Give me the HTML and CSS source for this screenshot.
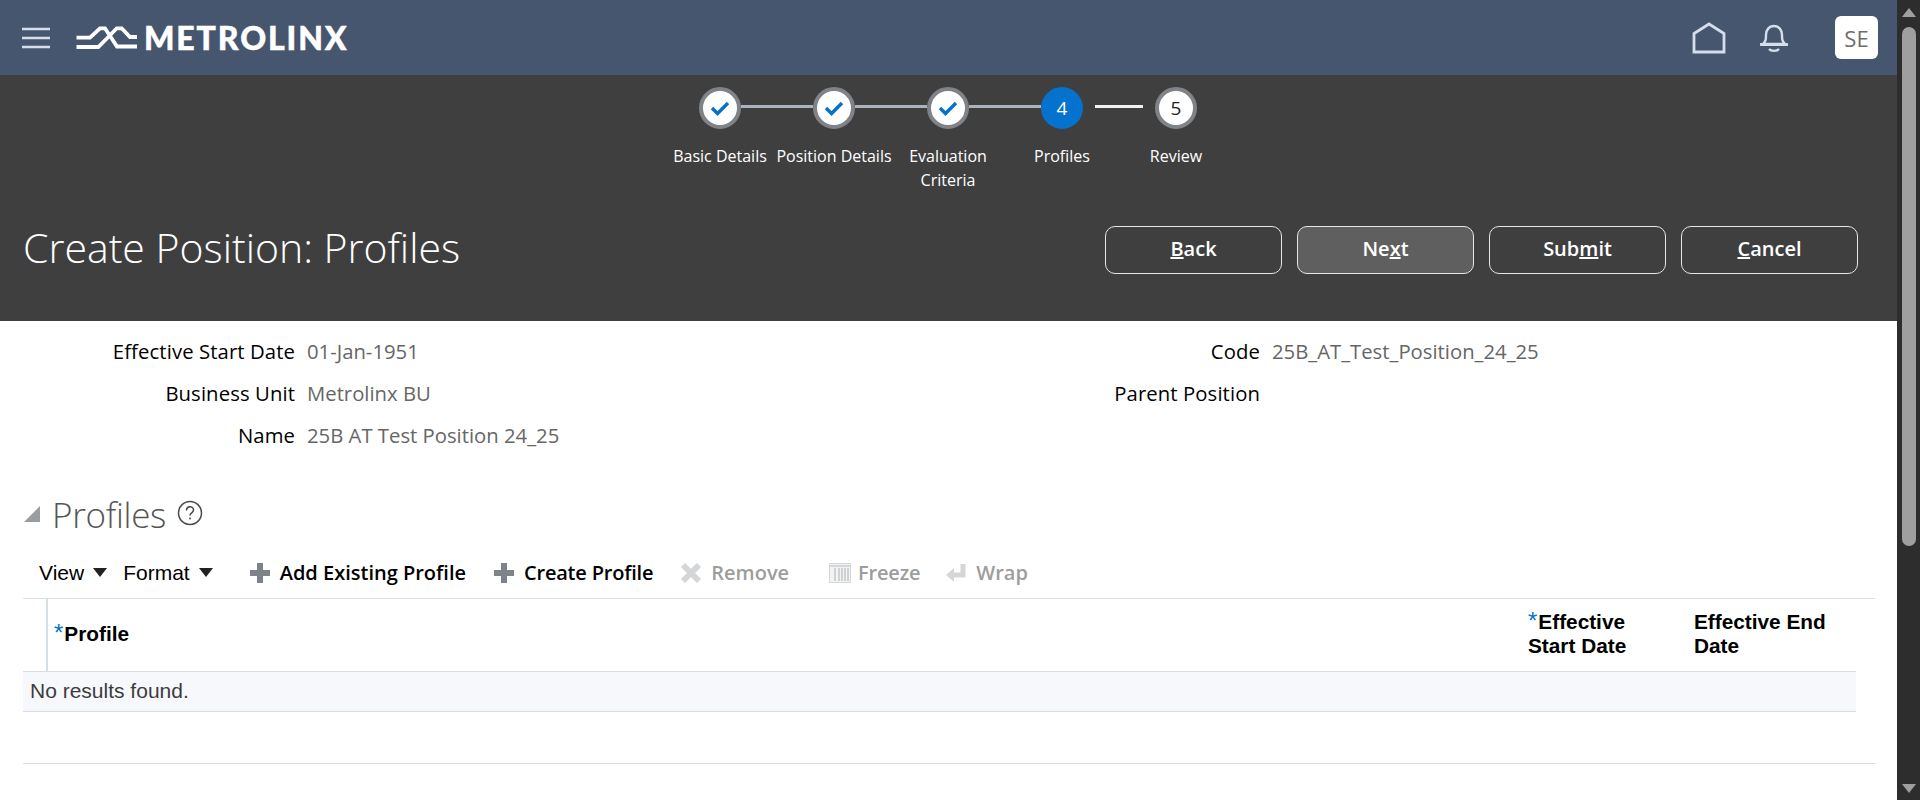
FILE: index.html
```html
<!DOCTYPE html>
<html lang="en">
<head>
<meta charset="utf-8">
<title>Create Position: Profiles</title>
<link rel="stylesheet" href="styles.css">
</head>
<body>
<div class="app">
  <div class="main">
    <header class="topbar">
      <svg class="burger" viewBox="0 0 28 22"><path d="M0 2h28M0 11h28M0 20h28" stroke="#d5deea" stroke-width="2.6" fill="none"/></svg>
      <div class="logo">
        <svg class="logo-mark" viewBox="0 0 61 24"><path d="M0.500 11.700H14L24 2.300H29L41 20.500H61M0.500 21H22.300L33.300 10L40.700 2.300H45.700L54 11H61" stroke="#fff" stroke-width="3.800" fill="none"/></svg>
        <span class="logo-text">METROLINX</span>
      </div>
      <div class="topbar-right">
        <svg class="ico-home" viewBox="0 0 34 32"><path d="M2 30V11.500L17 2L32 11.500V30Z" stroke="#d5deea" stroke-width="2.800" fill="none"/></svg>
        <svg class="ico-bell" viewBox="0 0 28 30"><path d="M3 21c3-3 3-5 3-9 0-5 3-9 8-9s8 4 8 9c0 4 0 6 3 9Z" stroke="#d5deea" stroke-width="2.400" fill="none" stroke-linejoin="round"/><path d="M1 21.500h26" stroke="#d5deea" stroke-width="3" stroke-linecap="round"/><path d="M9 26c2 2.500 8 2.500 10 0" stroke="#d5deea" stroke-width="2.400" fill="none"/></svg>
        <div class="avatar">SE</div>
      </div>
    </header>

    <section class="band">
      <ol class="stepper">
        <li class="step done"><span class="dot"><svg viewBox="0 0 20 16"><path d="M2 8l5.500 5.500L18 3" stroke="#0572ce" stroke-width="3.400" fill="none"/></svg></span><span class="step-label">Basic Details</span></li>
        <li class="step done"><span class="dot"><svg viewBox="0 0 20 16"><path d="M2 8l5.500 5.500L18 3" stroke="#0572ce" stroke-width="3.400" fill="none"/></svg></span><span class="step-label">Position Details</span></li>
        <li class="step done"><span class="dot"><svg viewBox="0 0 20 16"><path d="M2 8l5.500 5.500L18 3" stroke="#0572ce" stroke-width="3.400" fill="none"/></svg></span><span class="step-label">Evaluation Criteria</span></li>
        <li class="step current"><span class="dot">4</span><span class="step-label">Profiles</span></li>
        <li class="step last"><span class="dot">5</span><span class="step-label">Review</span></li>
      </ol>
      <div class="title-row">
        <h1 class="page-title">Create Position: Profiles</h1>
        <div class="actions">
          <button class="btn"><u>B</u>ack</button>
          <button class="btn btn-active">Ne<u>x</u>t</button>
          <button class="btn">Sub<u>m</u>it</button>
          <button class="btn"><u>C</u>ancel</button>
        </div>
      </div>
    </section>

    <section class="form">
      <div class="form-col">
        <div class="field"><span class="f-label">Effective Start Date</span><span class="f-value">01-Jan-1951</span></div>
        <div class="field"><span class="f-label">Business Unit</span><span class="f-value">Metrolinx BU</span></div>
        <div class="field"><span class="f-label">Name</span><span class="f-value">25B AT Test Position 24_25</span></div>
      </div>
      <div class="form-col form-col-right">
        <div class="field"><span class="f-label">Code</span><span class="f-value">25B_AT_Test_Position_24_25</span></div>
        <div class="field"><span class="f-label">Parent Position</span><span class="f-value"></span></div>
      </div>
    </section>

    <section class="panel">
      <div class="panel-head">
        <svg class="disclose" viewBox="0 0 16 16"><path d="M16 0V16H0Z" fill="#9a9d9f"/></svg>
        <h2 class="panel-title">Profiles</h2>
        <svg class="help" viewBox="0 0 26 26"><circle cx="13" cy="13" r="11.500" stroke="#4a4a4a" stroke-width="1.500" fill="none"/><path d="M9.500 10.500c0-5 7-5 7-.5 0 2.800-3.500 2.800-3.500 5.500" stroke="#4a4a4a" stroke-width="1.500" fill="none"/><circle cx="13" cy="18.500" r="1" fill="#4a4a4a"/></svg>
      </div>
      <div class="toolbar">
        <span class="menu menu-view">View<i class="caret"></i></span>
        <span class="menu menu-format">Format<i class="caret"></i></span>
        <span class="tool tool-add"><svg class="ti" viewBox="0 0 20 20"><path d="M10 0v20M0 10h20" stroke="#7d8388" stroke-width="6"/></svg>Add Existing Profile</span>
        <span class="tool tool-create"><svg class="ti" viewBox="0 0 20 20"><path d="M10 0v20M0 10h20" stroke="#7d8388" stroke-width="6"/></svg>Create Profile</span>
        <span class="tool off tool-remove"><svg class="ti ti-x" viewBox="0 0 22 22"><path d="M3 3l16 16M19 3L3 19" stroke="#d4d6d8" stroke-width="6"/></svg>Remove</span>
        <span class="tool off tool-freeze"><svg class="ti ti-f" viewBox="0 0 22 20"><path d="M.5.5h21v19H.5Z" fill="#f2f3f3" stroke="#d4d6d8"/><path d="M1 3h20" stroke="#d4d6d8" stroke-width="2"/><path d="M6 5v13M10 5v13M13 5v13M16 5v13M19 5v13" stroke="#c4c6c8" stroke-width="1.500"/></svg>Freeze</span>
        <span class="tool off tool-wrap"><svg class="ti ti-w" viewBox="0 0 20 20"><path d="M17 1v11H6" stroke="#d4d6d8" stroke-width="5" fill="none"/><path d="M0 12l8-7v14Z" fill="#d4d6d8"/></svg>Wrap</span>
      </div>
      <div class="table">
        <div class="thead">
          <div class="th th-sel"></div>
          <div class="th th-profile"><span class="req">*</span><span>Profile</span></div>
          <div class="th th-date"><span class="req">*</span><span>Effective</span><br><span>Start Date</span></div>
          <div class="th th-date"><span>Effective End</span><br><span>Date</span></div>
        </div>
        <div class="empty">No results found.</div>
        <div class="foot"></div>
      </div>
    </section>
  </div>
  <aside class="scrollbar">
    <i class="arrow arrow-up"></i>
    <i class="thumb"></i>
    <i class="arrow arrow-down"></i>
  </aside>
</div>
</body>
</html>
```
FILE: styles.css
```css
* { box-sizing: border-box; }
html, body { margin: 0; height: 100%; overflow: hidden; background: #fff; }
body { font-family: "Open Sans", "Noto Sans", sans-serif; }
.app { display: flex; height: 800px; }
.main { flex: 1; min-width: 0; overflow: hidden; }

.topbar { height: 75px; background: #47566f; display: flex; align-items: center; padding: 0 19px 0 22px; }
.burger { width: 28px; height: 22px; }
.logo { display: flex; align-items: center; margin-left: 26px; }
.logo-mark { width: 61px; height: 24px; }
.logo-text { margin-left: 7px; font-family: Lato, sans-serif; font-weight: 900; font-size: 32px; line-height: 30px; color: #fff; letter-spacing: 1.9px; -webkit-text-stroke: .5px #fff; }
.topbar-right { margin-left: auto; display: flex; align-items: center; }
.ico-home { width: 34px; height: 32px; }
.ico-bell { width: 28px; height: 30px; margin-left: 34px; }
.avatar { width: 43px; height: 43px; margin-left: 47px; background: #fff; border-radius: 6px; color: #6d6d6d; font-size: 22px; display: flex; align-items: center; justify-content: center; }

.band { height: 246px; background: #3f3f3f; padding: 12px 23px 0; }
.stepper { list-style: none; margin: 0 0 0 640px; padding: 0; display: flex; height: 104px; }
.step { width: 114px; display: flex; flex-direction: column; align-items: center; position: relative; color: #fff; }
.step::after { content: ""; position: absolute; left: 78px; width: 72px; top: 18px; height: 3px; background: #aab2bc; }
.step.current::after { left: 90px; width: 48px; background: #f2f2f2; }
.step.last::after { display: none; }
.dot { flex: none; width: 42px; height: 42px; border-radius: 50%; background: #fff; border: 4px solid #7f8387; display: flex; align-items: center; justify-content: center; font-size: 19px; color: #222; position: relative; z-index: 1; }
.dot svg { width: 20px; height: 16px; }
.step.current .dot { background: #0572ce; border-color: #0572ce; color: #fff; }
.step-label { margin-top: 15px; font-size: 16px; line-height: 24px; text-align: center; width: 126px; flex: none; }

.title-row { display: flex; align-items: center; justify-content: space-between; height: 48px; margin-top: 35px; padding-right: 16px; }
.page-title { margin: 0 0 7px; font-weight: 300; font-size: 41px; line-height: 48px; color: #fff; }
.actions { display: flex; gap: 15px; }
.btn { width: 177px; height: 48px; background: transparent; border: 1px solid #e6e6e6; border-radius: 10px; color: #fff; font-family: inherit; font-weight: 600; font-size: 20px; padding: 0 0 3px; }
.btn-active { background: #5f5f5f; }

.form { display: flex; height: 180px; padding-top: 9px; }
.form-col { width: 965px; }
.form-col-right { width: 900px; }
.field { display: flex; height: 42.200px; align-items: center; font-size: 20.300px; }
.f-label { width: 295px; text-align: right; color: #000; flex: none; font-weight: 500; letter-spacing: .1px; }
.f-value { margin-left: 12px; color: #666; font-weight: 500; }

.panel { padding: 0 22px 0 23px; }
.panel-head { display: flex; align-items: center; height: 52px; margin-top: -12px; }
.disclose { width: 16px; height: 16px; margin: -3px 0 0 1px; }
.panel-title { margin: 0 0 0 12px; font-weight: 300; font-size: 35px; line-height: 52px; color: #555; letter-spacing: -.3px; }
.help { width: 26px; height: 26px; margin-left: 11px; margin-top: -4px; }

.toolbar { display: flex; align-items: center; height: 51px; margin-top: 6px; }
.menu { font-family: "Liberation Sans", Arial, sans-serif; font-size: 21px; color: #000; display: inline-flex; align-items: center; }
.menu-view { margin-left: 16px; }
.menu-format { margin-left: 16px; }
.caret { width: 0; height: 0; border: 7px solid transparent; border-top: 9px solid #222; border-bottom: 0; margin-left: 9px; }
.tool { display: inline-flex; align-items: center; color: #000; font-weight: 600; font-size: 20px; }
.ti { width: 20px; height: 20px; margin-right: 10px; }
.ti-x { width: 22px; height: 22px; margin-right: 9px; }
.ti-f { width: 22px; height: 20px; margin-right: 7px; }
.tool-add { margin-left: 37px; }
.tool-create { margin-left: 28px; letter-spacing: -.2px; }
.tool-remove { margin-left: 27px; }
.tool-freeze { margin-left: 40px; letter-spacing: -.2px; }
.tool-wrap { margin-left: 26px; }
.off { color: #9d9d9d; }

.table { border-top: 1px solid #d6dfe6; font-family: "Liberation Sans", Arial, sans-serif; }
.thead { display: grid; grid-template-columns: 25px 1471px 166px 168px; height: 72px; width: 1830px; }
.th { font-weight: 700; font-size: 20.800px; line-height: 24px; color: #000; }
.th-sel { border-right: 2px solid #d6dfe6; }
.th-profile { padding: 0 0 2px 6px; align-self: center; }
.th-date { align-self: center; padding: 0 20px 2px 9px; }
.req { color: #0572ce; font-weight: 400; font-size: 24px; line-height: 0; margin-right: 1px; }
.empty { width: 1833px; height: 41px; background: #f7f8fc; border-top: 1px solid #d6dfe6; border-bottom: 1px solid #d6dfe6; font-size: 21px; line-height: 37px; padding-left: 7px; color: #3c3c3c; }
.foot { height: 52px; border-bottom: 1px solid #d6dfe6; }

.scrollbar { width: 23px; flex: none; background: #2d2d2d; display: flex; flex-direction: column; align-items: center; padding: 8px 0 7px 1px; }
.thumb { width: 14px; height: 519px; background: #9f9f9f; border-radius: 7px; margin-top: 10px; }
.arrow { width: 0; height: 0; border-left: 7px solid transparent; border-right: 7px solid transparent; }
.arrow-up { border-bottom: 9px solid #9f9f9f; }
.arrow-down { border-top: 9px solid #9f9f9f; margin-top: auto; }
```
